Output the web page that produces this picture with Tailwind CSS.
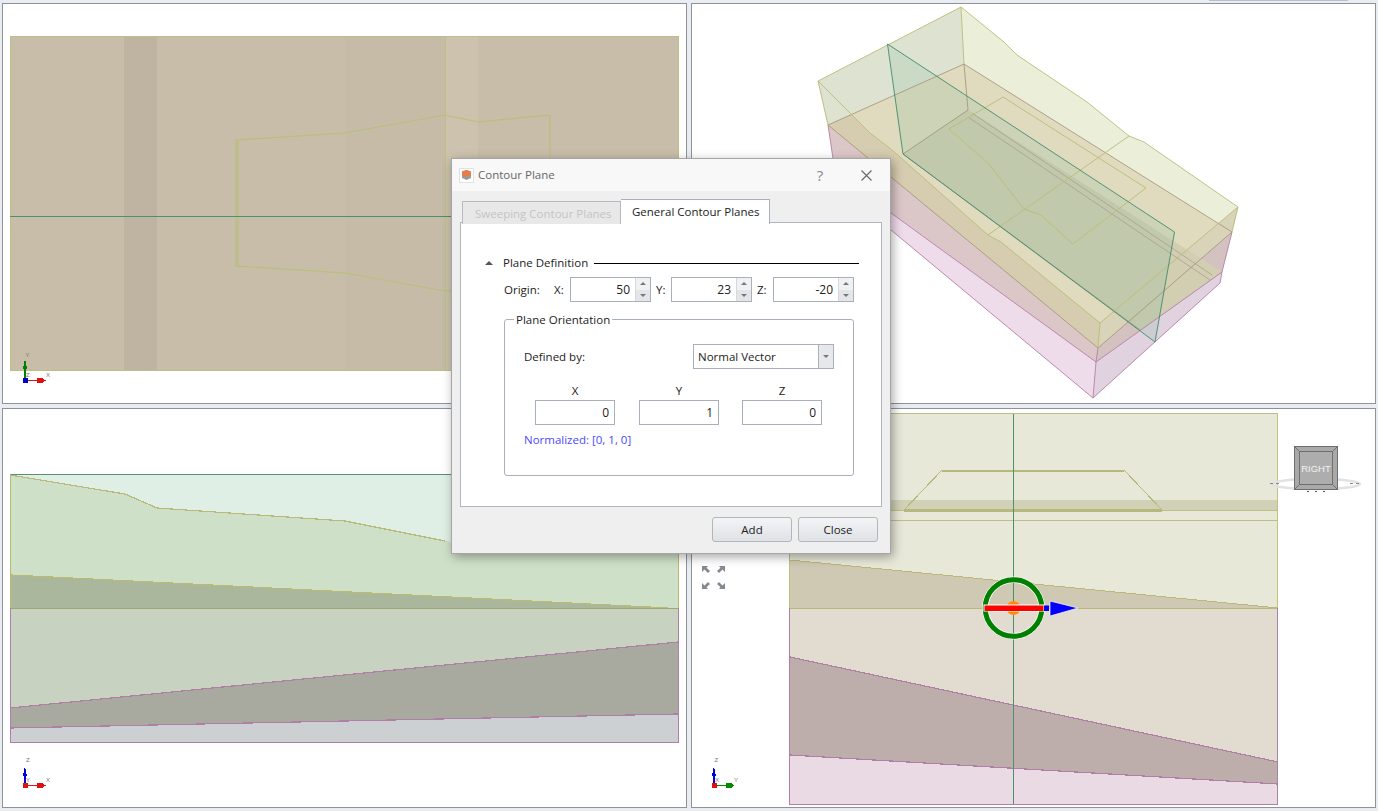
<!DOCTYPE html>
<html lang="en">

<head>
  <meta charset="UTF-8">
  <title>Contour Plane</title>
  <script src="https://cdn.jsdelivr.net/npm/@tailwindcss/browser@4"></script>
</head>

<body class="relative w-[1378px] h-[811px] overflow-hidden bg-[#e9ecf1] font-['Open_Sans',sans-serif] text-[11.5px] text-[#222]">
  <div class="absolute top-0 left-[1209px] w-[139px] h-[1px] bg-[#b8bfcc]"></div>

  <!-- four viewports -->
  <main class="grid grid-cols-[685px_685px] grid-rows-[401px_400px] gap-[4px] pt-[3px] px-[2px] h-full">

    <!-- top / xy -->
    <section class="border border-[#8f9399] bg-white">
      <svg class="block w-full h-full" viewBox="3 4 683 399" shape-rendering="crispEdges">
        <rect x="10" y="37" width="668" height="333" fill="#c8bda9" />
        <rect x="124" y="37" width="33" height="333" fill="#bfb4a2" />
        <rect x="345" y="37" width="100" height="333" fill="#c6bba7" />
        <rect x="445" y="37" width="33" height="333" fill="#ccc2ad" />
        <rect x="10.500" y="36.500" width="668" height="334" fill="none" stroke="#bcc084" />
        <path d="M445 37V370" stroke="#bcc084" fill="none" />
        <path d="M550 115L478 122L445 115L345 133L236 140V266L345 273L445 291L478 291M238 140V266M550 115V160" stroke="#b8bf7a" stroke-width="1.200" fill="none" shape-rendering="auto" />
        <path d="M10 216.500H452" stroke="#4d8f6f" fill="none" />
        <path d="M25 381V362" stroke="#008000" stroke-width="1.500" />
        <path d="M23 369L25 358L27 369Z" fill="#008000" />
        <path d="M25 380.500H44" stroke="#e01010" stroke-width="1.500" />
        <path d="M37 378H42L46 380.500L42 383H37Z" fill="#e01010" />
        <rect x="22.500" y="378" width="5" height="5" fill="#0000c8" />
        <g font-size="6" fill="#777" font-family="Liberation Sans, sans-serif">
          <text x="25.500" y="357">Y</text>
          <text x="26" y="377">Z</text>
          <text x="46" y="377">X</text>
        </g>
      </svg>
    </section>

    <!-- perspective -->
    <section class="border border-[#8f9399] bg-white">
      <svg class="block w-full h-full" viewBox="692 4 683 399">
        <!-- bottom layer, pale pink -->
        <path d="M828 125L838 186L1093 398L1220 283L1222 272L1232 232L964 64Z" fill="#efdcea" />
        <path d="M1096 362L1093 398L1220 283L1222 272Z" fill="#e0d3df" />
        <!-- middle layer -->
        <path d="M828 125L835 172L1096 362L1098 348Z" fill="#dcc7c8" />
        <path d="M1098 348L1096 362L1222 272L1232 232Z" fill="#d3c2bf" />
        <!-- top layer -->
        <path d="M828 125L1098 348L1232 232L964 64Z" fill="#e0dabf" />
        <path d="M818 81L870 133L892 150L988 235L1001 242L1100 323L1098 348L828 125Z" fill="#d6ccaf" />
        <path d="M961 7L818 81L828 125L964 64Z" fill="#dee2d0" />
        <path d="M961 7L1004 42L1017 55L1087 102L1129 136L1144 142L1238 207L1232 232L964 64Z" fill="#ebeed8" />
        <path d="M1100 323L1238 207L1232 232L1098 348Z" fill="#d9d3b9" />
        <!-- inner floor -->
        <path d="M968 110L903 154L1140 330L1222 272Z" fill="#d2ceb2" />
        <!-- contour plane -->
        <path d="M887.500 44L1174.500 232L1155 342L903 154Z" fill="#6fb48c" fill-opacity="0.17" />
        <!-- edges -->
        <g fill="none" stroke="#a09073" stroke-width="0.8">
          <path d="M828 125L964 64L1232 232L1098 348Z" />
          <path d="M964 64L968 110L903 154L1140 330" />
        </g>
        <g fill="none" stroke="#a58f86" stroke-width="0.6">
          <path d="M972 113L1212 275" />
          <path d="M968 117L1210 280" />
        </g>
        <g fill="none" stroke="#b8bd75" stroke-width="0.9">
          <path d="M818 81L961 7L1004 42L1017 55L1087 102L1129 136L1144 142L1238 207L1100 323L1001 242L988 235L892 150L870 133Z" />
          <path d="M961 7L964 64M818 81L828 125M1238 207L1232 232M1100 323L1098 348" />
          <path d="M949 129L1003 97L1146 188L1073 244L1041 215L1024 209L988 163Z" />
          <path d="M1129 136L988 235" />
        </g>
        <g fill="none" stroke="#b77fa8" stroke-width="0.9">
          <path d="M828 125L835 172M1096 362L1222 272L1232 232M1098 348L1096 362L1093 398L1220 283L1222 272" />
          <path d="M891 213L1096 362M891 230L1093 398" />
        </g>
        <path d="M887.500 44L1174.500 232L1155 342L903 154Z" fill="none" stroke="#3f8c6d" stroke-width="0.9" />
      </svg>
    </section>

    <!-- front / xz -->
    <section class="border border-[#8f9399] bg-white">
      <svg class="block w-full h-full" viewBox="3 409 683 398" shape-rendering="crispEdges">
        <rect x="10" y="474" width="668" height="134" fill="#e0efe6" />
        <path d="M10 475L125 494L157 508L345 521L445 541L480 545H678V608H10Z" fill="#cfe0c8" />
        <path d="M10 575L668 608H10Z" fill="#abb79d" />
        <rect x="10" y="608" width="668" height="134" fill="#c7d2c0" />
        <path d="M10 708L678 642V714L10 728Z" fill="#a9aa9f" />
        <path d="M10 728L678 714V742H10Z" fill="#cdd0d2" />
        <path d="M10 474.500H678" stroke="#5d8f72" fill="none" />
        <path d="M10 475L125 494L157 508L345 521L445 541" stroke="#b9b97a" stroke-width="1.200" fill="none" />
        <path d="M10 575L668 608" stroke="#b9b97a" stroke-width="1.300" fill="none" />
        <path d="M10 608.500H678" stroke="#a0a66e" fill="none" />
        <path d="M10.500 475V608M678.500 545V608" stroke="#b5bb6f" fill="none" />
        <path d="M10.500 608V742.500H678.500V608" stroke="#b07fa6" fill="none" />
        <path d="M10 708L678 642M10 728L678 714" stroke="#b07fa6" stroke-width="1.200" fill="none" />
        <path d="M25 786V770" stroke="#0000e0" stroke-width="1.500" />
        <path d="M23 776L25 766L27 776Z" fill="#0000e0" />
        <path d="M25 785.500H44" stroke="#e01010" stroke-width="1.500" />
        <path d="M37 783H42L46 785.500L42 788H37Z" fill="#e01010" />
        <rect x="23" y="783" width="5" height="5" fill="#e01010" />
        <g font-size="6" fill="#777" font-family="Liberation Sans, sans-serif">
          <text x="26" y="762">Z</text>
          <text x="26" y="782">Y</text>
          <text x="46" y="782">X</text>
        </g>
      </svg>
    </section>

    <!-- right / yz -->
    <section class="border border-[#8f9399] bg-white">
      <svg class="block w-full h-full" viewBox="692 409 683 398" shape-rendering="crispEdges">
        <rect x="790" y="414" width="488" height="390" fill="#e7e8d8" />
        <rect x="790" y="500" width="488" height="10" fill="#d1d1b8" />
        <path d="M790 560L1278 608H790Z" fill="#cfc9b3" />
        <path d="M790 608H1278V762L790 657Z" fill="#e2dbd0" />
        <path d="M790 657L1278 762V784L790 755Z" fill="#bdaeac" />
        <path d="M790 755L1278 784V804H790Z" fill="#e9dae4" />
        <path d="M790 413.500H1278M790 510.500H1278M790 520.500H1278" stroke="#bcc084" fill="none" />
        <path d="M790 560L1278 608M790 608.500H1278" stroke="#b9b97a" fill="none" />
        <path d="M789.500 413V608M1277.500 413V608" stroke="#bcc084" fill="none" />
        <path d="M789.500 608V804.500H1277.500V608" stroke="#b07fa6" fill="none" />
        <path d="M790 657L1278 762M790 755L1278 784" stroke="#b07fa6" stroke-width="1.200" fill="none" />
        <path d="M942 470.500H1124" stroke="#b5b97c" stroke-width="2" fill="none" />
        <path d="M942 470L904 510M1124 470L1162 510" stroke="#b5b97c" fill="none" />
        <path d="M904 510.500H1162" stroke="#b5b97c" stroke-width="2.500" fill="none" />
        <path d="M1013.500 414V804" stroke="#4d8f6f" fill="none" />

        <!-- move handle -->
        <g shape-rendering="auto">
          <circle cx="1013.500" cy="608" r="31" fill="none" stroke="white" stroke-width="1" />
          <circle cx="1013.500" cy="608" r="25.500" fill="none" stroke="white" stroke-width="1" />
          <circle cx="1013.500" cy="608" r="28.300" fill="none" stroke="#008000" stroke-width="5" />
          <circle cx="1013.500" cy="608" r="7" fill="#ff8c0a" />
          <rect x="983.500" y="604.500" width="61" height="7" fill="white" />
          <rect x="984.500" y="605.500" width="59" height="5.500" fill="#ff0000" />
          <rect x="1044" y="605.500" width="5" height="5.500" fill="#0000ff" />
          <path d="M1050 601L1078 608L1050 616Z" fill="#0000ff" stroke="white" stroke-width="0.7" />
        </g>

        <!-- expand view arrows -->
        <g fill="#858a90" shape-rendering="auto">
          <path d="M702 566H708L706.500 567.700L710 571L708 573L704.500 569.500L702 572Z" />
          <path d="M725 566H719L720.500 567.700L717 571L719 573L722.500 569.500L725 572Z" />
          <path d="M702 589H708L706.500 587.300L710 584L708 582L704.500 585.500L702 583Z" />
          <path d="M725 589H719L720.500 587.300L717 584L719 582L722.500 585.500L725 583Z" />
        </g>

        <!-- view cube -->
        <ellipse cx="1316" cy="484" rx="44" ry="5" fill="none" stroke="#e2e2e2" stroke-width="2.500" shape-rendering="auto" />
        <path d="M1270 483H1281M1350 483H1362" stroke="#8a8a8a" stroke-dasharray="3 3" fill="none" />
        <rect x="1294.500" y="446.500" width="43" height="43" fill="#a9a9a9" stroke="#6f6f6f" />
        <rect x="1299.500" y="451.500" width="33" height="33" fill="#adadad" stroke="#6f6f6f" />
        <path d="M1295 447L1299 451M1337 447L1333 451M1295 489L1299 485M1337 489L1333 485" stroke="#6f6f6f" fill="none" />
        <text x="1316" y="472" text-anchor="middle" font-size="9.500" fill="#f2f2f2" font-family="Liberation Sans, sans-serif" shape-rendering="auto">RIGHT</text>
        <path d="M1307 491h2M1315 491h2M1323 491h2" stroke="#555" fill="none" />

        <path d="M714 785V770" stroke="#0000e0" stroke-width="1.500" />
        <path d="M712 776L714 766L716 776Z" fill="#0000e0" />
        <path d="M714 785.500H732" stroke="#008a00" stroke-width="1.500" />
        <path d="M726 783H731L734 785.500L731 788H726Z" fill="#008a00" />
        <rect x="712" y="783" width="5" height="5" fill="#e01010" />
        <g font-size="6" fill="#777" font-family="Liberation Sans, sans-serif">
          <text x="714.500" y="762">Z</text>
          <text x="715" y="782">X</text>
          <text x="734" y="782">Y</text>
        </g>
      </svg>
    </section>
  </main>

  <!-- dialog -->
  <div class="absolute left-[451px] top-[158px] w-[440px] h-[396px] flex flex-col border border-[#a5a5a5] bg-[#efefef] shadow-[2px_3px_10px_rgba(0,0,0,0.35)]">
    <div class="flex items-center h-[32px] shrink-0 bg-[#f8f8f8] pl-[7px] text-[#666]">
      <div class="flex items-center justify-center w-[15px] h-[15px] border border-[#e2e2e2] bg-white">
        <svg class="w-[11px] h-[12px]" viewBox="0 0 11 12">
          <path d="M1 2.500L5.500 1L10 2.500V9L5.500 11L1 9Z" fill="#9b9b9b" />
          <path d="M1 2.500L5.500 1L10 2.500V6L5.500 8L1 6Z" fill="#e87d4a" />
        </svg>
      </div>
      <span class="ml-[4px]">Contour Plane</span>
      <span class="ml-auto w-[16px] text-center text-[15px] leading-none text-[#888]">?</span>
      <svg class="ml-[33px] mr-[18px] w-[11px] h-[11px]" viewBox="0 0 11 11">
        <path d="M0.500 0.500L10.500 10.500M10.500 0.500L0.500 10.500" stroke="#666" stroke-width="1.100" fill="none" />
      </svg>
    </div>

    <div class="flex items-end h-[33px] shrink-0 pl-[10px] -mb-[1px] relative z-10">
      <div class="flex items-center h-[23px] w-[159px] pl-[12px] pt-[2px] border border-b-0 border-[#b4b9c2] bg-[#e8e8e8] text-[#c4c4c4]">Sweeping Contour Planes</div>
      <div class="flex items-center h-[25px] w-[149px] pl-[11px] pb-[1px] border border-l-0 border-b-0 border-[#aab0bb] bg-white">General Contour Planes</div>
    </div>

    <div class="mx-[8px] h-[285px] shrink-0 border border-[#b0b5c0] bg-white pl-[24px] pr-[22px] pt-[32px] -mt-[1px]">
      <div class="flex items-center h-[16px]">
        <span class="w-0 h-0 border-x-[4px] border-x-transparent border-b-[4px] border-b-[#555]"></span>
        <span class="ml-[10px]">Plane Definition</span>
        <span class="ml-[6px] flex-1 h-[1px] bg-black"></span>
      </div>

      <div class="flex items-center h-[25px] mt-[6px] ml-[19px]">
        <span class="w-[50px]">Origin:</span>
        <span class="w-[16px]">X:</span>
        <div class="flex w-[81px] h-[25px] border border-[#aab0bb]">
          <span class="flex-1 flex items-center justify-end pr-[5px] text-[12px]">50</span>
          <div class="flex flex-col w-[15px] border-l border-[#d5d8dd] bg-[#f0f1f3]">
            <span class="flex-1 flex items-center justify-center"><span class="w-0 h-0 border-x-[3px] border-x-transparent border-b-[3px] border-b-[#777]"></span></span>
            <span class="flex-1 flex items-center justify-center bg-[#e3e5e9]"><span class="w-0 h-0 border-x-[3px] border-x-transparent border-t-[3px] border-t-[#777]"></span></span>
          </div>
        </div>
        <span class="ml-[5px] w-[15px]">Y:</span>
        <div class="flex w-[81px] h-[25px] border border-[#aab0bb]">
          <span class="flex-1 flex items-center justify-end pr-[5px] text-[12px]">23</span>
          <div class="flex flex-col w-[15px] border-l border-[#d5d8dd] bg-[#f0f1f3]">
            <span class="flex-1 flex items-center justify-center"><span class="w-0 h-0 border-x-[3px] border-x-transparent border-b-[3px] border-b-[#777]"></span></span>
            <span class="flex-1 flex items-center justify-center bg-[#e3e5e9]"><span class="w-0 h-0 border-x-[3px] border-x-transparent border-t-[3px] border-t-[#777]"></span></span>
          </div>
        </div>
        <span class="ml-[5px] w-[16px]">Z:</span>
        <div class="flex w-[81px] h-[25px] border border-[#aab0bb]">
          <span class="flex-1 flex items-center justify-end pr-[5px] text-[12px]">-20</span>
          <div class="flex flex-col w-[15px] border-l border-[#d5d8dd] bg-[#f0f1f3]">
            <span class="flex-1 flex items-center justify-center"><span class="w-0 h-0 border-x-[3px] border-x-transparent border-b-[3px] border-b-[#777]"></span></span>
            <span class="flex-1 flex items-center justify-center bg-[#e3e5e9]"><span class="w-0 h-0 border-x-[3px] border-x-transparent border-t-[3px] border-t-[#777]"></span></span>
          </div>
        </div>
      </div>

      <fieldset class="ml-[19px] mr-[5px] mt-[11px] h-[163px] border border-[#aab0bb] rounded-[3px] pl-[19px] pr-[19px]">
        <legend class="-ml-[10px] px-[2px] leading-[13px]">Plane Orientation</legend>
        <div class="flex items-center justify-between h-[25px] mt-[18px]">
          <span>Defined by:</span>
          <div class="flex w-[141px] h-[25px] border border-[#aab0bb]">
            <span class="flex-1 flex items-center pl-[4px]">Normal Vector</span>
            <span class="flex items-center justify-center w-[15px] border-l border-[#aab0bb] bg-[#e6e8ec]"><span class="w-0 h-0 border-x-[3px] border-x-transparent border-t-[3px] border-t-[#777]"></span></span>
          </div>
        </div>
        <div class="flex mt-[13px] ml-[11px] gap-[24px] text-center">
          <div class="w-[80px]">
            <div class="leading-[18px]">X</div>
            <div class="h-[25px] flex items-center justify-end pr-[5px] border border-[#aab0bb] text-[12px]">0</div>
          </div>
          <div class="w-[80px]">
            <div class="leading-[18px]">Y</div>
            <div class="h-[25px] flex items-center justify-end pr-[5px] border border-[#aab0bb] text-[12px]">1</div>
          </div>
          <div class="w-[80px] -ml-[1px]">
            <div class="leading-[18px]">Z</div>
            <div class="h-[25px] flex items-center justify-end pr-[5px] border border-[#aab0bb] text-[12px]">0</div>
          </div>
        </div>
        <p class="mt-[6px] text-[#4a4aff]">Normalized: [0, 1, 0]</p>
      </fieldset>
    </div>

    <div class="flex justify-end gap-[6px] pr-[12px] mt-[10px]">
      <button class="w-[80px] h-[25px] border border-[#b3b7bd] rounded-[3px] bg-gradient-to-b from-[#f3f4f6] to-[#dfe2e6]">Add</button>
      <button class="w-[80px] h-[25px] border border-[#b3b7bd] rounded-[3px] bg-gradient-to-b from-[#f3f4f6] to-[#dfe2e6]">Close</button>
    </div>
  </div>
</body>

</html>
